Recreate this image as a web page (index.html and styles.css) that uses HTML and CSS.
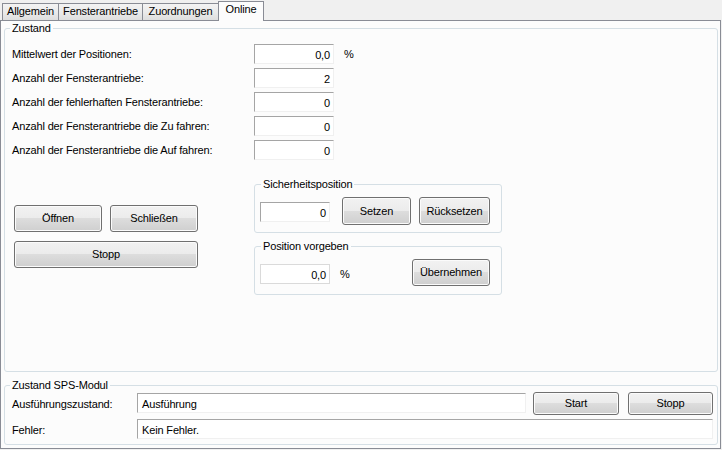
FILE: index.html
```html
<!DOCTYPE html>
<html lang="de">
<head>
<meta charset="utf-8">
<title>Online</title>
<link rel="stylesheet" href="styles.css">
</head>
<body>
<div class="tabs">
  <div class="tab t1">Allgemein</div>
  <div class="tab t2">Fensterantriebe</div>
  <div class="tab t3">Zuordnungen</div>
  <div class="tab t4 active">Online</div>
</div>
<div class="panel">
  <fieldset class="group zustand">
    <legend>Zustand</legend>
    <div class="row"><span class="lbl">Mittelwert der Positionen:</span><span class="tb num">0,0</span><span class="unit">%</span></div>
    <div class="row"><span class="lbl">Anzahl der Fensterantriebe:</span><span class="tb num">2</span></div>
    <div class="row"><span class="lbl">Anzahl der fehlerhaften Fensterantriebe:</span><span class="tb num">0</span></div>
    <div class="row"><span class="lbl">Anzahl der Fensterantriebe die Zu fahren:</span><span class="tb num">0</span></div>
    <div class="row"><span class="lbl">Anzahl der Fensterantriebe die Auf fahren:</span><span class="tb num">0</span></div>
    <div class="middle">
      <div class="actions">
        <div class="btnrow">
          <button class="btn half">Öffnen</button>
          <button class="btn half">Schließen</button>
        </div>
        <button class="btn wide">Stopp</button>
      </div>
      <div class="subgroups">
        <fieldset class="group sub">
          <legend>Sicherheitsposition</legend>
          <div class="subrow">
            <span class="tb num small">0</span>
            <button class="btn setzen">Setzen</button>
            <button class="btn ruecksetzen">Rücksetzen</button>
          </div>
        </fieldset>
        <fieldset class="group sub">
          <legend>Position vorgeben</legend>
          <div class="subrow">
            <span class="tb num small light">0,0</span>
            <span class="unit2">%</span>
            <button class="btn uebernehmen">Übernehmen</button>
          </div>
        </fieldset>
      </div>
    </div>
  </fieldset>
  <fieldset class="group sps">
    <legend>Zustand SPS-Modul</legend>
    <div class="spsrow">
      <span class="slbl">Ausführungszustand:</span>
      <span class="tb txt state">Ausführung</span>
      <button class="btn start">Start</button>
      <button class="btn stop2">Stopp</button>
    </div>
    <div class="spsrow second">
      <span class="slbl">Fehler:</span>
      <span class="tb txt err">Kein Fehler.</span>
    </div>
  </fieldset>
</div>
</body>
</html>
```

FILE: styles.css
```css
* { box-sizing: border-box; }
html, body { margin: 0; padding: 0; }
body {
  width: 722px;
  height: 450px;
  overflow: hidden;
  background: #f0f0f0;
  color: #000;
  font: 11px/13px "Liberation Sans", Arial, sans-serif;
  letter-spacing: -0.15px;
}

/* tabs */
.tabs {
  display: flex;
  align-items: flex-end;
  height: 20px;
  padding-left: 2px;
  position: relative;
  z-index: 1;
}
.tab {
  height: 17px;
  border: 1px solid #898c95;
  border-bottom: none;
  background: linear-gradient(#f3f3f3, #ebebeb 50%, #dedede);
  text-align: center;
  padding-top: 1px;
  white-space: nowrap;
}
.t1 { width: 57px; }
.t2 { width: 85px; margin-left: -1px; }
.t3 { width: 77px; margin-left: -1px; }
.t4 { width: 46px; margin-left: -1px; }
.tab.active {
  height: 20px;
  margin-bottom: -1px;
  background: #fcfcfc;
  padding-top: 1px;
}

/* panel */
.panel {
  width: 721px;
  height: 429px;
  border: 1px solid #898c95;
  background: #fcfcfc;
  padding: 1px 2px 3px 3px;
}

.group {
  margin: 0;
  min-width: 0;
  border: 1px solid #d5dfe5;
  border-radius: 3px;
  padding: 9px 0 0 7px;
}
.group legend {
  padding: 0 2px;
  margin-left: -2px;
  line-height: 13px;
}
.zustand { height: 350px; }

.row {
  display: flex;
  align-items: center;
  height: 20px;
  margin-bottom: 4px;
}
.lbl { width: 242px; white-space: nowrap; }
.unit { margin-left: 10px; }

.tb {
  display: block;
  height: 20px;
  background: #fff;
  border: 1px solid #f0f0f0;
  border-top-color: #a5a5a5;
  border-left-color: #a5a5a5;
  white-space: nowrap;
  overflow: hidden;
}
.num {
  width: 80px;
  text-align: right;
  padding: 3px 3px 0 0;
  line-height: 15px;
}
.txt {
  text-align: left;
  padding: 3px 0 0 4px;
  line-height: 14px;
}
.small { width: 70px; margin-top: 5px; }
.light { border-color: #dadada; }

/* buttons */
.btn {
  display: block;
  margin: 0;
  padding: 0;
  font: inherit;
  letter-spacing: inherit;
  color: #000;
  border: 1px solid #707070;
  border-radius: 3px;
  background: linear-gradient(#f2f2f2, #ebebeb 50%, #dddddd 50%, #cfcfcf);
  box-shadow: inset 0 0 0 1px #fbfbfb;
  white-space: nowrap;
}

.middle { display: flex; }
.actions {
  width: 242px;
  padding: 41px 0 0 2px;
}
.btnrow { display: flex; gap: 8px; }
.half { width: 88px; height: 27px; }
.wide { width: 184px; height: 27px; margin-top: 9px; }

.subgroups {
  display: flex;
  flex-direction: column;
  gap: 7px;
  padding-top: 14px;
}
.sub {
  width: 248px;
  height: 55px;
  padding: 6px 11px 0 5px;
}
.sub legend { margin-left: 1px; }
.subrow { display: flex; align-items: flex-start; }
.setzen { width: 69px; height: 28px; margin-left: 12px; }
.ruecksetzen { width: 71px; height: 28px; margin-left: 8px; }
.unit2 { margin: 9px 0 0 10px; }
.uebernehmen { width: 78px; height: 27px; margin-left: auto; }

/* SPS */
.sps {
  margin-top: 7px;
  height: 66px;
  padding: 0 4px 0 7px;
}
.spsrow { display: flex; align-items: flex-start; }
.slbl { width: 125px; line-height: 13px; padding-top: 6px; }
.state { width: 389px; margin-top: 1px; }
.start { width: 86px; height: 23px; margin-left: 7px; }
.stop2 { width: 85px; height: 23px; margin-left: 9px; }
.second { margin-top: 4px; }
.second .slbl { padding-top: 5px; }
.err { width: 576px; }
```
